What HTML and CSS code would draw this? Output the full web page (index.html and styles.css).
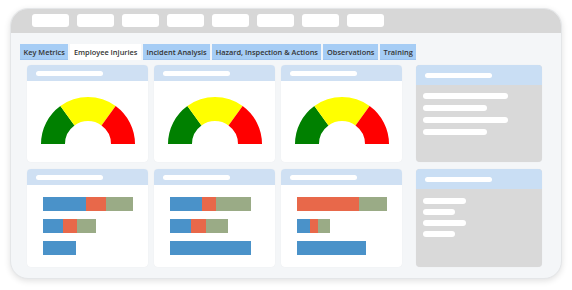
FILE: index.html
```html
<!DOCTYPE html>
<html>
<head>
<meta charset="utf-8">
<link rel="stylesheet" href="styles.css">
</head>
<body>
<div class="frame">
  <div class="topbar">
    <span class="pill"></span><span class="pill"></span><span class="pill"></span><span class="pill"></span>
    <span class="pill"></span><span class="pill"></span><span class="pill"></span><span class="pill"></span>
  </div>
  <div class="tabs">
    <span class="tab">Key Metrics</span>
    <span class="tab active">Employee Injuries</span>
    <span class="tab">Incident Analysis</span>
    <span class="tab">Hazard, Inspection &amp; Actions</span>
    <span class="tab">Observations</span>
    <span class="tab">Training</span>
  </div>
  <div class="grid">
    <div class="card">
      <div class="head"><span class="hline"></span></div>
      <div class="gaugebody">
        <svg class="gauge" width="94" height="47" viewBox="-47 -47 94 47">
          <path d="M-47 0 A47 47 0 0 1 -27.63 -38.02 L-13.52 -18.61 A23 23 0 0 0 -23 0 Z" fill="#008000"/>
          <path d="M-27.63 -38.02 A47 47 0 0 1 27.63 -38.02 L13.52 -18.61 A23 23 0 0 0 -13.52 -18.61 Z" fill="#ffff00"/>
          <path d="M27.63 -38.02 A47 47 0 0 1 47 0 L23 0 A23 23 0 0 0 13.52 -18.61 Z" fill="#ff0000"/>
        </svg>
      </div>
    </div>
    <div class="card">
      <div class="head"><span class="hline"></span></div>
      <div class="gaugebody">
        <svg class="gauge" width="94" height="47" viewBox="-47 -47 94 47">
          <path d="M-47 0 A47 47 0 0 1 -27.63 -38.02 L-13.52 -18.61 A23 23 0 0 0 -23 0 Z" fill="#008000"/>
          <path d="M-27.63 -38.02 A47 47 0 0 1 27.63 -38.02 L13.52 -18.61 A23 23 0 0 0 -13.52 -18.61 Z" fill="#ffff00"/>
          <path d="M27.63 -38.02 A47 47 0 0 1 47 0 L23 0 A23 23 0 0 0 13.52 -18.61 Z" fill="#ff0000"/>
        </svg>
      </div>
    </div>
    <div class="card">
      <div class="head"><span class="hline"></span></div>
      <div class="gaugebody">
        <svg class="gauge" width="94" height="47" viewBox="-47 -47 94 47">
          <path d="M-47 0 A47 47 0 0 1 -27.63 -38.02 L-13.52 -18.61 A23 23 0 0 0 -23 0 Z" fill="#008000"/>
          <path d="M-27.63 -38.02 A47 47 0 0 1 27.63 -38.02 L13.52 -18.61 A23 23 0 0 0 -13.52 -18.61 Z" fill="#ffff00"/>
          <path d="M27.63 -38.02 A47 47 0 0 1 47 0 L23 0 A23 23 0 0 0 13.52 -18.61 Z" fill="#ff0000"/>
        </svg>
      </div>
    </div>
    <div class="card side">
      <div class="head shead"><span class="hline"></span></div>
      <div class="sidebody top">
        <span class="line l85"></span><span class="line l64"></span><span class="line l85"></span><span class="line l64"></span>
      </div>
    </div>

    <div class="card">
      <div class="head"><span class="hline"></span></div>
      <div class="barbody">
        <div class="bar"><span class="seg b" style="width:43px"></span><span class="seg o" style="width:20px"></span><span class="seg g" style="width:27px"></span></div>
        <div class="bar"><span class="seg b" style="width:20px"></span><span class="seg o" style="width:14px"></span><span class="seg g" style="width:19px"></span></div>
        <div class="bar"><span class="seg b" style="width:33px"></span></div>
      </div>
    </div>
    <div class="card">
      <div class="head"><span class="hline"></span></div>
      <div class="barbody">
        <div class="bar"><span class="seg b" style="width:32px"></span><span class="seg o" style="width:14px"></span><span class="seg g" style="width:35px"></span></div>
        <div class="bar"><span class="seg b" style="width:21px"></span><span class="seg o" style="width:15px"></span><span class="seg g" style="width:22px"></span></div>
        <div class="bar"><span class="seg b" style="width:81px"></span></div>
      </div>
    </div>
    <div class="card">
      <div class="head"><span class="hline"></span></div>
      <div class="barbody">
        <div class="bar"><span class="seg o" style="width:62px"></span><span class="seg g" style="width:28px"></span></div>
        <div class="bar"><span class="seg b" style="width:13px"></span><span class="seg o" style="width:8px"></span><span class="seg g" style="width:12px"></span></div>
        <div class="bar"><span class="seg b" style="width:69px"></span></div>
      </div>
    </div>
    <div class="card side">
      <div class="head shead"><span class="hline"></span></div>
      <div class="sidebody bottom">
        <span class="line l43"></span><span class="line l32"></span><span class="line l43"></span><span class="line l32"></span>
      </div>
    </div>
  </div>
</div>
</body>
</html>
```
FILE: styles.css
```css
html, body {
  margin: 0;
  padding: 0;
  background: #ffffff;
}
body {
  width: 572px;
  height: 290px;
  overflow: hidden;
  font-family: "Open Sans", "Liberation Sans", sans-serif;
}
.frame {
  margin: 8px 0 0 10px;
  width: 552px;
  height: 271px;
  box-sizing: border-box;
  border: 1px solid #e4e6e8;
  border-radius: 18px;
  background: #f4f6f8;
  overflow: hidden;
  box-shadow: 0 2px 6px rgba(0, 0, 0, 0.12);
}
.topbar {
  height: 24px;
  background: #d7d7d7;
  display: flex;
  align-items: flex-start;
  gap: 8px;
  padding: 5px 0 0 21px;
  box-sizing: border-box;
}
.pill {
  width: 37px;
  height: 13px;
  background: #ffffff;
  border-radius: 3px;
}
.tabs {
  display: flex;
  gap: 2px;
  margin: 11px 0 0 9px;
  height: 16px;
}
.tab {
  display: flex;
  align-items: center;
  height: 16px;
  padding: 0 3.5px;
  background: #a6cdf5;
  color: #333333;
  font-size: 7.4px;
  font-weight: 600;
  white-space: nowrap;
  border-bottom: 1px solid #9cc3ee;
  box-sizing: border-box;
}
.tab.active {
  background: #ffffff;
  border-bottom: none;
}
.grid {
  display: grid;
  grid-template-columns: 121px 121px 121px 134px;
  grid-template-rows: 97px 98px;
  column-gap: 6px;
  row-gap: 7px;
  margin: 5px 0 0 16px;
}
.grid .side {
  margin-left: 8px;
}
.card {
  background: #ffffff;
  border-radius: 4px;
  overflow: hidden;
  display: flex;
  flex-direction: column;
  box-shadow: 0 0 1px rgba(0, 0, 0, 0.08);
}
.head {
  height: 16px;
  flex: none;
  background: #cfe0f3;
  padding: 6px 0 0 9px;
  box-sizing: border-box;
}
.shead {
  height: 20px;
  padding-top: 8px;
  background: #c9def4;
}
.hline {
  display: block;
  width: 67px;
  height: 5px;
  background: #ffffff;
  border-radius: 3px;
}
.gaugebody {
  display: flex;
  justify-content: center;
  padding-top: 16px;
}
.gauge {
  display: block;
}
.barbody {
  display: flex;
  flex-direction: column;
  gap: 8px;
  padding: 12px 0 0 16px;
}
.bar {
  display: flex;
  height: 14px;
}
.seg {
  height: 14px;
}
.seg.b { background: #4a92c9; }
.seg.o { background: #e8684a; }
.seg.g { background: #9aab86; }
.side {
  background: #d9d9d9;
}
.sidebody {
  display: flex;
  flex-direction: column;
  padding-left: 7px;
}
.sidebody.top {
  gap: 6px;
  padding-top: 8px;
}
.sidebody.bottom {
  gap: 5px;
  padding-top: 9px;
}
.line {
  display: block;
  height: 6px;
  background: #ffffff;
  border-radius: 3px;
}
.l85 { width: 85px; }
.l64 { width: 64px; }
.l43 { width: 43px; }
.l32 { width: 32px; }
```
